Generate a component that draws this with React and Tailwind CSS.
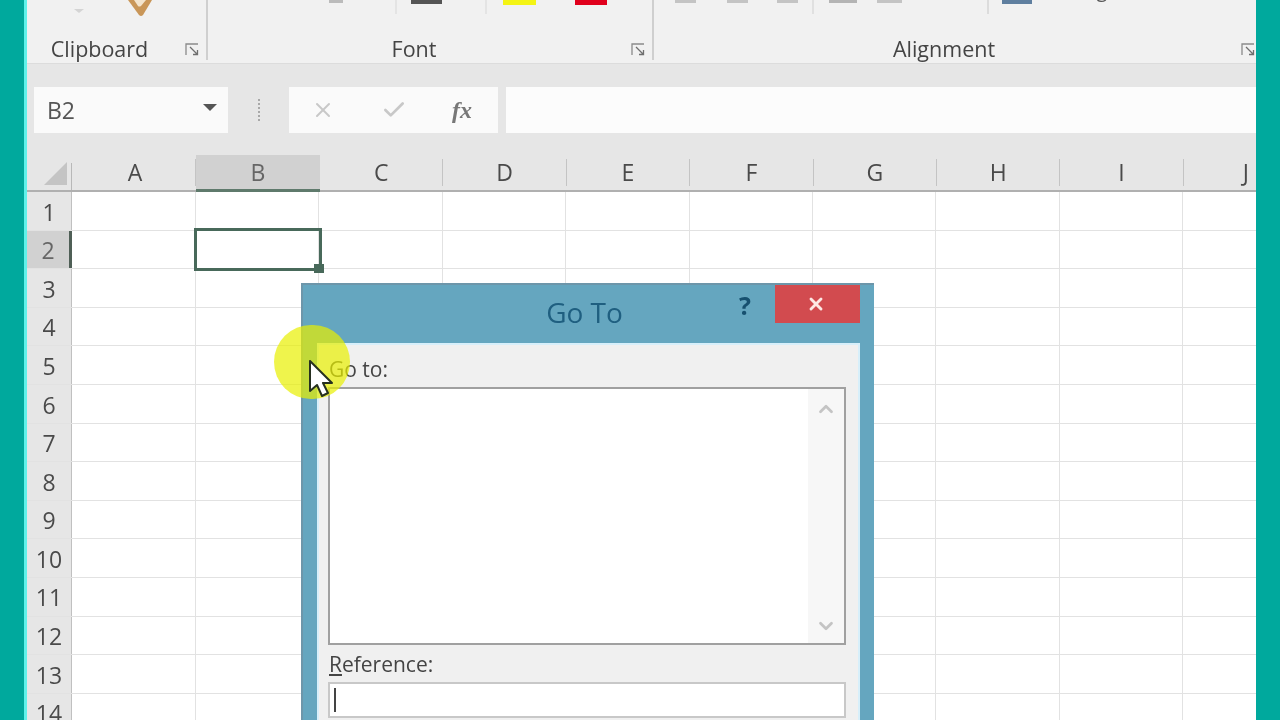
import React from 'react'
import { ChevronUp, ChevronDown, X, Check } from 'lucide-react'

const columns = ['A', 'B', 'C', 'D', 'E', 'F', 'G', 'H', 'I', 'J']
const rows = [1, 2, 3, 4, 5, 6, 7, 8, 9, 10, 11, 12, 13, 14]

const GroupLauncher = ({ className }) => (
  <svg className={className} width="15" height="14" viewBox="0 0 15 14" fill="none" stroke="#8a8a8a" strokeWidth="1.3">
    <path d="M1 12V1h12" />
    <path d="M5 4l7 7M8 11.5h4.5V7" stroke="#6f6f6f" />
  </svg>
)

const CellCursor = () => (
  <svg className="absolute left-[308px] top-[360px]" width="26" height="38" viewBox="0 0 26 38">
    <path d="M2 1v30l7-6 5 11 6-3-5-10h9z" fill="#fff" stroke="#26301f" strokeWidth="2" strokeLinejoin="round" />
  </svg>
)

const Ribbon = () => (
  <div className="h-[64px] flex bg-[#f1f1f1] border-b border-[#dcdcdc] text-[21.5px] text-[#444] relative overflow-hidden">
    <div className="w-[181px] border-r-2 border-[#cfcfcf] mb-[3px] relative flex items-end justify-center pr-[34px] pb-[1px]">
      <span className="leading-[27px] translate-y-[3px]">Clipboard</span>
      <GroupLauncher className="absolute right-[6px] bottom-[3px]" />
      <svg className="absolute left-[99px] top-0" width="28" height="18" viewBox="0 0 28 18">
        <path d="M2 0h24l-9 15q-2 2-4 0z" fill="#c99658" />
        <path d="M8 0h12l-5 6q-2 1-3 0z" fill="#f3e4cd" />
      </svg>
      <span className="absolute left-[47px] top-[9px] w-0 h-0 border-x-[5px] border-x-transparent border-t-[4px] border-t-[#d4d4d4]" />
    </div>
    <div className="w-[446px] border-r-2 border-[#cfcfcf] mb-[3px] relative flex items-end justify-center pr-[32px] pb-[1px]">
      <span className="leading-[27px] translate-y-[3px]">Font</span>
      <GroupLauncher className="absolute right-[6px] bottom-[3px]" />
      <div className="absolute left-[121px] top-0 w-[14px] h-[3px] bg-[#bbb]" />
      <div className="absolute left-[187px] top-0 w-[2px] h-[14px] bg-[#e4e4e4]" />
      <div className="absolute left-[203px] top-0 w-[31px] h-[4px] bg-[#555]" />
      <div className="absolute left-[277px] top-0 w-[2px] h-[14px] bg-[#e4e4e4]" />
      <div className="absolute left-[295px] top-0 w-[33px] h-[5px] bg-[#f4f414]" />
      <div className="absolute left-[367px] top-0 w-[32px] h-[5px] bg-[#e0001c]" />
    </div>
    <div className="flex-1 relative flex items-end justify-center pb-[1px] mb-[3px]">
      <span className="leading-[27px] pr-[22px] translate-y-[3px]">Alignment</span>
      <GroupLauncher className="absolute right-0 bottom-[3px]" />
      <div className="absolute left-[21px] top-0 w-[21px] h-[3px] bg-[#c4c4c4]" />
      <div className="absolute left-[73px] top-0 w-[21px] h-[3px] bg-[#c4c4c4]" />
      <div className="absolute left-[123px] top-0 w-[21px] h-[3px] bg-[#c4c4c4]" />
      <div className="absolute left-[158px] top-0 w-[2px] h-[14px] bg-[#e0e0e0]" />
      <div className="absolute left-[175px] top-0 w-[28px] h-[3px] bg-[#b4b4b4]" />
      <div className="absolute left-[223px] top-0 w-[25px] h-[3px] bg-[#c4c4c4]" />
      <div className="absolute left-[333px] top-0 w-[2px] h-[14px] bg-[#dcdcdc]" />
      <div className="absolute left-[348px] top-0 w-[30px] h-[4px] bg-[#5f7f9f]" />
      <span className="absolute left-[405px] -top-[25px] text-[20px] leading-[30px] text-[#555] whitespace-nowrap">Merge &amp; Center</span>
    </div>
  </div>
)

const FormulaBar = () => (
  <div className="h-[91px] bg-[#e6e6e6] flex pt-[23px] pb-[22px] pl-[7px] text-[#555]">
    <div className="w-[194px] bg-[#fafafa] flex items-center justify-between pl-[13px] pr-[11px]">
      <span className="text-[23px] text-[#555]">B2</span>
      <span className="w-0 h-0 border-x-[7px] border-x-transparent border-t-[7px] border-t-[#555] mb-[6px]" />
    </div>
    <div className="w-[61px] flex items-center justify-center">
      <span className="h-[22px] border-l-2 border-dotted border-[#a8a8a8]" />
    </div>
    <div className="w-[209px] bg-[#fafafa] flex items-center pl-[22px]">
      <X size={24} color="#c8c8c8" strokeWidth={2} />
      <Check size={26} color="#c8c8c8" strokeWidth={2.5} className="ml-[46px]" />
      <span className="ml-[45px] text-[24px] italic font-bold text-[#777] font-['Liberation_Serif',serif]">fx</span>
    </div>
    <div className="flex-1 ml-[8px] bg-[#fcfcfc]" />
  </div>
)

const GridHeader = () => (
  <div className="h-[37px] flex bg-[#e6e6e6] border-b-2 border-[#b0b0b0]">
    <div className="w-[45px] shrink-0 border-r border-[#b8b8b8] mt-[8px] flex items-end justify-end pr-[4px] pb-[5px]">
      <span className="w-0 h-0 border-l-[23px] border-l-transparent border-b-[23px] border-b-[#c4c4c4]" />
    </div>
    {columns.map((col) => {
      if (col === 'B') {
        return (
          <div key={col} className="w-[124px] shrink-0 bg-[#d1d1d1] border-b-[3px] border-[#5f7a6c] -mb-[2px] flex items-center justify-center text-[23px] font-medium text-[#666]">
            {col}
          </div>
        )
      }
      if (col === 'J') {
        return (
          <div key={col} className="flex-1 flex items-center justify-end pr-[7px] text-[23px] font-medium text-[#4a4a4a]">
            {col}
          </div>
        )
      }
      return (
        <div
          key={col}
          className={
            col === 'A'
              ? 'w-[124px] shrink-0 border-r border-[#c4c4c4] mt-[8px] -translate-y-[4px] flex items-center justify-center pl-[3px] text-[23px] font-medium text-[#4a4a4a]'
              : 'w-[123.4px] shrink-0 border-r border-[#c4c4c4] mt-[8px] -translate-y-[4px] flex items-center justify-center text-[23px] font-medium text-[#4a4a4a]'
          }
        >
          {col}
        </div>
      )
    })}
  </div>
)

const GridRow = ({ n }) => (
  <div className="h-[38.6px] flex border-b border-[#e2e2e2]">
    <div
      className={
        n === 2
          ? 'w-[45px] shrink-0 bg-[#d1d1d1] border-r-[3px] border-[#4f5f56] flex items-center justify-center pt-[2px] text-[23px] text-[#666]'
          : 'w-[45px] shrink-0 bg-[#e6e6e6] border-r border-[#c0c0c0] flex items-center justify-center pt-[2px] text-[23px] text-[#4a4a4a]'
      }
    >
      {n}
    </div>
    {columns.map((col) => (
      <div
        key={col}
        className={col === 'A' ? 'w-[124px] shrink-0 border-r border-[#e2e2e2]' : 'w-[123.4px] shrink-0 border-r border-[#e2e2e2]'}
      />
    ))}
  </div>
)

const GoToDialog = () => (
  <div className="absolute left-[301px] top-[283px] w-[573px] h-[437px] bg-[#65a6bf] border-t-2 border-l-2 border-[#6d96aa] flex flex-col">
    <div className="h-[58px] shrink-0 relative flex items-center justify-center pr-[8px] pb-[4px]">
      <span className="text-[28px] text-[#1f5f80]">Go To</span>
      <span className="absolute left-[436px] top-[2px] text-[25px] font-bold text-[#17506f]">?</span>
      <div className="absolute left-[472px] top-0 w-[85px] h-[38px] bg-[#d24b4f] flex items-center justify-center pr-[3px]">
        <X size={20} color="#fde8e4" strokeWidth={3.5} />
      </div>
    </div>
    <div className="flex-1 ml-[14px] mr-[14px] bg-[#f0f0f0] border-t-2 border-x-2 border-[#d7effa] pl-[9px] flex flex-col">
      <label className="h-[42px] shrink-0 flex items-end pb-[7px] text-[21px] text-[#444] leading-none pl-[1px]">Go to:</label>
      <div className="w-[518px] h-[258px] shrink-0 bg-white border-2 border-[#a0a0a0] flex justify-end">
        <div className="w-[36px] bg-[#f7f7f7] flex flex-col justify-between items-center pt-[9px] pb-[6px]">
          <ChevronUp size={22} color="#c4c4c4" strokeWidth={3} />
          <ChevronDown size={22} color="#c4c4c4" strokeWidth={3} />
        </div>
      </div>
      <label className="h-[37px] shrink-0 flex items-end pb-[7px] text-[21px] text-[#444] leading-none pl-[1px]">
        <span className="underline">R</span>eference:
      </label>
      <div className="w-[518px] h-[36px] shrink-0 bg-white border-2 border-[#c8c8c8] flex items-center pl-[4px]">
        <span className="w-[2px] h-[24px] bg-[#444]" />
      </div>
    </div>
  </div>
)

const App = () => (
  <div className="relative w-[1280px] h-[720px] overflow-hidden bg-[#00a99d] font-['Open_Sans','Noto_Sans',sans-serif]">
    <div className="relative w-full h-full blur-[0.6px]">
      <div className="flex h-full">
        <div className="w-[24px] shrink-0" />
        <div className="w-[1232px] shrink-0 border-l-[3px] border-[#5ff2ea] bg-white overflow-hidden">
          <Ribbon />
          <FormulaBar />
          <GridHeader />
          {rows.map((n) => (
            <GridRow key={n} n={n} />
          ))}
        </div>
      </div>
      <div className="absolute left-[194px] top-[228px] w-[128px] h-[43px] border-[3px] border-[#48695a]" />
      <div className="absolute left-[314px] top-[264px] w-[10px] h-[9px] bg-[#48695a]" />
      <GoToDialog />
      <div className="absolute left-[274px] top-[325px] w-[76px] h-[74px] rounded-full bg-[#e8f000]/70" />
      <CellCursor />
    </div>
  </div>
)

export default App
